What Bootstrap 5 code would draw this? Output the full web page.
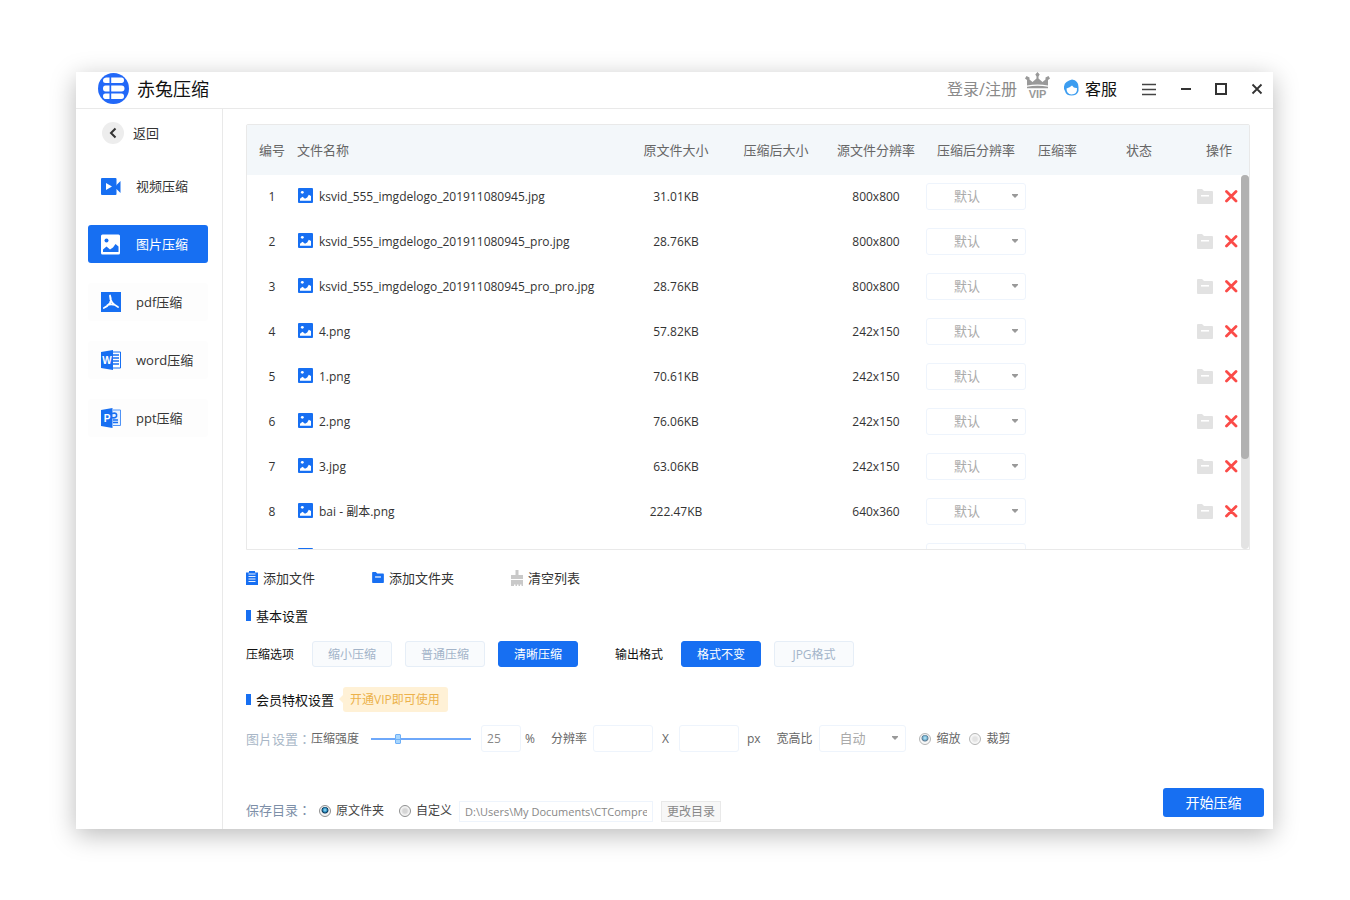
<!DOCTYPE html>
<html lang="zh-CN">
<head>
<meta charset="utf-8">
<meta name="viewport" content="width=device-width, initial-scale=1">
<title>赤兔压缩</title>
<link rel="stylesheet" href="https://cdn.jsdelivr.net/npm/bootstrap@5.3.0/dist/css/bootstrap.min.css">
<style>
:root { --blue: #176ff2; --line: #e9e9e9; --soft: #eef4fc; }
body { font-family: "Open Sans", "Noto Sans CJK SC", sans-serif; font-size: 13px; line-height: 20px; color: #333; background: #fff; }
.desk { padding: 72px 77px 71px 76px; }
.app-window { background: #fff; box-shadow: 0 6px 24px rgba(0,0,0,.27); }
a { color: inherit; text-decoration: none; }
button { font: inherit; }
svg { flex: none; display: block; }
.title-bar { height: 37px; border-bottom: 1px solid var(--line); padding: 0 8px 2px 22px; }
.title-bar > svg { margin-bottom: 2px; }
.brand { font-size: 18px; color: #111; margin-left: 8px; }
.top-link { font-size: 16px; }
.plain-btn { background: none; border: 0; padding: 0; color: inherit; }
.help-icon { margin: 0 6px 4px 14px; }
.win-btns { gap: 24px; margin: 0 2px 0 25px; }
.side { width: 147px; border-right: 1px solid var(--line); padding: 12px 14px 0 12px; }
.back-link { height: 24px; padding-left: 13px; gap: 8px; margin-bottom: 22px; }
.side-nav { gap: 20px; }
.side-item { height: 38px; border-radius: 3px; padding: 0 0 1px 12px; gap: 14px; background: #fdfdfd; }
.side-item.first { background: none; }
.side-item.active { background: var(--blue); color: #fff; }
.work { padding: 15px 9px 0 23px; min-width: 0; }
.list-panel { border: 1px solid var(--line); margin-right: 14px; border-radius: 2px 2px 0 0; flex: 1 1 0; min-height: 0; }
.file-table { table-layout: fixed; width: 100%; font-size: 12px; }
.file-table th { height: 50px; background: #f3f7fa; color: #666; font-weight: 400; font-size: 13px; padding: 0 0 1px; text-align: center; white-space: nowrap; }
.file-table td { height: 45px; padding: 0 0 2px; text-align: center; white-space: nowrap; }
.file-table .name { text-align: left; }
.file-cell { gap: 6px; padding-left: 1px; }
.file-cell svg { margin-bottom: 2px; }
.pick { appearance: none; font: inherit; font-size: 13px; color: #aaa; border: 1px solid var(--soft); border-radius: 3px; height: 27px; width: 100%; padding: 0 0 2px 27px; opacity: 1;
  background: #fff url("data:image/svg+xml,%3Csvg xmlns='http://www.w3.org/2000/svg' width='6' height='4'%3E%3Cpath d='M0 0h6v1L3 4 0 1z' fill='%23999'/%3E%3C/svg%3E") no-repeat right 7px top 10px; }
.scroll-track { top: 50px; right: 0; bottom: 0; width: 8px; background: #e3e3e3; border-radius: 4px; }
.scroll-thumb { height: 76%; background: #b1b1b1; border-radius: 4px; }
.tool-row { height: 40px; margin-top: 8px; gap: 57px; padding-bottom: 1px; }
.tool { gap: 5px; }
.sect { height: 36px; color: #111; padding-bottom: 1px; }
.sect::before { content: ""; width: 5px; height: 11px; background: var(--blue); margin-right: 5px; }
.opt-row { font-size: 12px; color: #111; margin: 7px 0 15px; gap: 13px; }
.opt-label { width: 53px; padding-top: 2px; }
.opt { width: 80px; height: 26px; border: 1px solid #e6eef7; border-radius: 3px; background: #f9fbfd; color: #a3b4c9; padding: 2px 0 0; }
.opt.chosen { background: var(--blue); border-color: var(--blue); color: #fff; }
.vip-tip { background: #fff1d6; color: #ecb14b; font-size: 12px; height: 25px; line-height: 25px; padding: 0 8px 0 7px; border-radius: 3px; margin-left: 9px; }
.vip-tip::before { content: ""; position: absolute; left: -4px; top: 8px; border: 4px solid transparent; border-left: 0; border-right-color: #fff1d6; }
.set-row { font-size: 12px; color: #666; margin: 7px 0 36px; height: 27px; white-space: nowrap; }
.num { width: 60px; height: 27px; border: 1px solid var(--soft); border-radius: 3px; padding: 0 5px; color: #888; background: #fff; font: inherit; }
.num.short { width: 40px; }
.field-label { margin: 0 6px 0 16px; }
.times { margin: 0 10px 0 9px; }
.ratio { width: 87px; padding-left: 20px; }
.level { appearance: none; width: 100px; height: 12px; margin: 0 10px 0 12px; background: linear-gradient(#6ea8fa, #6ea8fa) center / 100% 2px no-repeat; }
.level::-webkit-slider-thumb { appearance: none; width: 6px; height: 10px; border-radius: 1px; border: 1px solid #6fb0f8; background: linear-gradient(#a8d6fd 4px, #6fb0f8 4px 5px, #a8d6fd 5px); }
.dot { appearance: none; width: 12px; height: 12px; margin: 0 6px 0 0; border: 1px solid #8e8f8f; border-radius: 50%; background: radial-gradient(circle, #d5d5d5 2px, #f2f2f2 4px); box-shadow: inset 0 0 0 1px #f4f4f4; }
.dot:checked { background: radial-gradient(circle at 5px 4px, #a9e4fb 0, #2a8fc0 2px, #0c3557 3px, #f2f2f2 4px); }
.faded .dot { opacity: .65; }
.cap, .save-cap { font-family: "Noto Sans CJK TC", sans-serif; font-size: 13px; color: #a9b7c7; }
.save-cap { color: #7d8fa8; padding-bottom: 4px; }
.foot { height: 41px; }
.save-row { font-size: 12px; color: #444; height: 21px; margin-top: 13px; white-space: nowrap; }
.save-row .dot { margin: 0 5px 2px 0; }
.save-row label { padding-bottom: 1px; margin-right: 15px; }
.path-box { width: 194px; height: 21px; border: 1px solid var(--soft); background: #fff; padding: 0 5px; color: #888; font: inherit; font-size: 11px; margin: 0 8px 0 -8px; }
.dir-btn { width: 60px; height: 21px; border: 1px solid #e9e9e9; background: #f7f7f7; color: #888; padding: 0; line-height: 19px; }
.go-btn { width: 101px; height: 29px; border: 0; border-radius: 3px; background: var(--blue); color: #fff; font-size: 14px; }
</style>
</head>
<body>
<svg width="0" height="0" class="position-absolute" aria-hidden="true">
  <symbol id="pic" viewBox="0 0 15 15"><rect width="15" height="15" rx="1" fill="#176ff2"/><circle cx="4.3" cy="4.3" r="1.4" fill="#fff"/><path d="M2 12.8V10.8L4.5 8.8 7 10.8 9.2 9.5 10.8 6.8 13 8V12.8z" fill="#fff"/></symbol>
  <symbol id="folder" viewBox="0 0 16 15"><path d="M0 1Q0 0 1 0H5L7 2H15Q16 2 16 3V14Q16 15 15 15H1Q0 15 0 14z" fill="currentColor"/><path d="M4 6.8H12" stroke="#fff" stroke-width="1.6"/></symbol>
  <symbol id="cross" viewBox="0 0 13 13"><path d="M1.5 1.5 11 11M11 1.5 1.5 11" stroke="#fb4b48" stroke-width="2.8" stroke-linecap="round"/></symbol>
</svg>
<div class="desk vh-100">
<div class="app-window h-100 d-flex flex-column">
  <header class="title-bar d-flex align-items-center flex-shrink-0">
    <svg width="31" height="31" viewBox="0 0 31 31"><circle cx="15.5" cy="15.5" r="15.5" fill="#2268f8"/><g fill="#fff"><path d="M8 4.5H11.5V10H7.5Q5 10 5 7.5T8 4.5zM7.5 12.5H11.5V18.5H7.5Q5 18.5 5 15.5T7.5 12.5zM7.5 20.5H11.5V26H8Q5 26 5 23.2T7.5 20.5z"/><path d="M13.2 4.5H23.5Q26 4.5 26 7.3T23.5 10H13.2zM13.2 12.5H23.5Q26.5 12.5 26.5 15.5T23.5 18.5H13.2zM13.2 20.5H23.5Q26 20.5 26 23.2T23.5 26H13.2z"/></g></svg>
    <span class="brand">赤兔压缩</span>
    <div class="d-flex align-items-center ms-auto">
      <a href="#" class="top-link" style="color:#8a8a8a">登录/注册</a>
      <svg class="mb-2 ms-2" width="25" height="26" viewBox="0 0 25 26" fill="#999"><path d="M12.5 0 14.7 2.5 13.5 4.5V6.5L17.5 10 20.5 7.5V5.5L23.5 4 25 6.5 23 8V13.5Q12.5 11.5 2 13.5V8L0 6.5 1.5 4 4.5 5.500V7.500L7.500 10 11.500 6.500V4.500L10.300 2.500zM2 14.800Q12.500 12.700 23 14.800V16.300H2z"/><text x="12.5" y="25.5" font-family="Liberation Sans" font-weight="700" font-size="11" text-anchor="middle">VIP</text></svg>
      <svg class="help-icon" width="15" height="17" viewBox="0 0 15 17"><path d="M0 10Q-.5 5 2.5 3Q5 1 8 .5Q14.5 1.5 14.5 8V12Q13 16.5 7.500 16.500T1 12z" fill="#3c9df0"/><path d="M2.500 9.500Q6 8.500 8 6.500 10 9.500 13 9 13.500 15.300 7.500 15.500 2.500 15 2.500 9.500z" fill="#fff"/></svg>
      <a href="#" class="top-link" style="color:#111">客服</a>
      <div class="win-btns d-flex align-items-center">
      <button class="plain-btn" aria-label="菜单"><svg width="15" height="13" viewBox="0 0 15 13"><path d="M0 1.5H14M0 6.5H14M0 11.5H14" stroke="#444" stroke-width="1.7"/></svg></button>
      <button class="plain-btn" aria-label="最小化"><svg width="10" height="12" viewBox="0 0 10 12"><path d="M0 6H10" stroke="#333" stroke-width="2"/></svg></button>
      <button class="plain-btn" aria-label="最大化"><svg width="12" height="12" viewBox="0 0 12 12"><rect x="1" y="1" width="10" height="10" fill="none" stroke="#333" stroke-width="2"/></svg></button>
      <button class="plain-btn" aria-label="关闭"><svg width="12" height="12" viewBox="0 0 12 12"><path d="M1.5 1.5 10.5 10.5M10.5 1.5 1.5 10.5" stroke="#333" stroke-width="1.8"/></svg></button>
      </div>
    </div>
  </header>
  <div class="d-flex flex-grow-1" style="min-height:0">
    <aside class="side flex-shrink-0">
      <a href="#" class="back-link d-flex align-items-center">
        <svg width="24" height="24" viewBox="0 0 24 24"><circle cx="12" cy="12" r="11" fill="#ededed"/><path d="M14.5 7.5 10 12 14.5 16.5" fill="none" stroke="#333" stroke-width="2"/></svg>返回</a>
      <nav class="side-nav d-flex flex-column">
        <a href="#" class="side-item first d-flex align-items-center"><svg width="22" height="22" viewBox="0 0 22 22"><rect x="1" y="3" width="15.5" height="17" rx="1" fill="#176ff2"/><path d="M16 10.5 20.5 6V18L16 13.5z" fill="#176ff2"/><path d="M6 8V15L12 11.5z" fill="#fff"/></svg>视频压缩</a>
        <a href="#" class="side-item active d-flex align-items-center" aria-current="page"><svg width="22" height="22" viewBox="0 0 22 22"><rect x="1" y="1.5" width="19" height="20" rx="1.5" fill="#fff"/><circle cx="6.5" cy="7.5" r="2" fill="#176ff2"/><path d="M3 19V16.5L6.5 13.5 10 16.5 13 14.5 15.5 11 18.5 13.5V19z" fill="#176ff2"/></svg>图片压缩</a>
        <a href="#" class="side-item d-flex align-items-center"><svg width="22" height="22" viewBox="0 0 22 22"><rect x="1" y="1" width="20" height="20" fill="#176ff2"/><path d="M10 4.5Q11.5 9 10 12 7.5 15.5 3.8 17M10 5Q10 12 18 16M7.5 14Q11 12.8 15 14" fill="none" stroke="#fff" stroke-width="1.8" stroke-linecap="round"/></svg>pdf压缩</a>
        <a href="#" class="side-item d-flex align-items-center"><svg width="22" height="22" viewBox="0 0 22 22"><path d="M1 3 13 1V21L1 19z" fill="#176ff2"/><path d="M13 3H20.5V19H13" fill="#fff" stroke="#176ff2"/><path d="M13 6H19M13 9H19M13 12H19M13 15H19" stroke="#176ff2" stroke-width="1.5"/><text x="7" y="15" font-family="Liberation Sans" font-weight="700" font-size="10" fill="#fff" text-anchor="middle">W</text></svg>word压缩</a>
        <a href="#" class="side-item d-flex align-items-center"><svg width="22" height="22" viewBox="0 0 22 22"><path d="M13 3H20.5V18.5H13" fill="#eaf3ff" stroke="#4f93f6"/><path d="M12 6.5Q17.5 5 16.5 9.5 15 11.5 12 10.5M13 13H18M13 15.5H18" fill="none" stroke="#176ff2" stroke-width="1.6"/><path d="M1 3 12.5 1V21L1 19z" fill="#176ff2"/><text x="7" y="15" font-family="Liberation Sans" font-weight="700" font-size="10" fill="#fff" text-anchor="middle">P</text></svg>ppt压缩</a>
      </nav>
    </aside>
    <main class="work d-flex flex-column flex-grow-1">
      <section class="list-panel position-relative overflow-hidden">
        <table class="file-table">
          <colgroup><col style="width:50px"><col><col style="width:100px"><col style="width:100px"><col style="width:100px"><col style="width:100px"><col style="width:63px"><col style="width:100px"><col style="width:60px"></colgroup>
          <thead><tr><th>编号</th><th class="name">文件名称</th><th>原文件大小</th><th>压缩后大小</th><th>源文件分辨率</th><th>压缩后分辨率</th><th>压缩率</th><th>状态</th><th>操作</th></tr></thead>
          <tbody id="rows"></tbody>
        </table>
        <div class="scroll-track position-absolute"><div class="scroll-thumb"></div></div>
      </section>
      <div class="tool-row d-flex align-items-center flex-shrink-0">
        <button class="plain-btn tool d-flex align-items-center"><svg width="12" height="14" viewBox="0 0 12 14"><path d="M0 1.5H3V0H9V1.5H12V14H0z" fill="#176ff2"/><path d="M2.5 3H9.5M2.5 5.5H9.5M2.5 8H9.5M2.5 10.5H9.5" stroke="#fff" stroke-width=".9"/></svg>添加文件</button>
        <button class="plain-btn tool d-flex align-items-center"><svg width="12" height="11" style="color:#176ff2"><use href="#folder"/></svg>添加文件夹</button>
        <button class="plain-btn tool d-flex align-items-center"><svg width="12" height="16" viewBox="0 0 12 16" fill="#c9c9c9"><path d="M4.5 0H7.5V5H12V9H0V5H4.5zM0 10H12V16H10.5V14.5H9V16H7.5V14.5H6V16H4.5V14.5H3V16H0z"/></svg>清空列表</button>
      </div>
      <div class="sect d-flex align-items-center flex-shrink-0">基本设置</div>
      <div class="opt-row d-flex align-items-center flex-shrink-0">
        <span class="opt-label">压缩选项</span>
        <button class="opt">缩小压缩</button><button class="opt">普通压缩</button><button class="opt chosen">清晰压缩</button>
        <span class="opt-label ms-4">输出格式</span>
        <button class="opt chosen">格式不变</button><button class="opt">JPG格式</button>
      </div>
      <div class="sect d-flex align-items-center flex-shrink-0">会员特权设置<span class="vip-tip position-relative">开通VIP即可使用</span></div>
      <div class="set-row faded d-flex align-items-center flex-shrink-0">
        <span class="cap" lang="zh-TW">图片设置：</span><label for="level">压缩强度</label>
        <input id="level" class="level" type="range" min="0" max="100" value="25">
        <input class="num short" type="text" value="25" aria-label="压缩强度百分比"><span class="ms-1">%</span>
        <label for="rw" class="field-label">分辨率</label><input id="rw" class="num" type="text">
        <span class="times">X</span><input class="num" type="text" aria-label="高度"><span class="ms-2">px</span>
        <label for="ratio" class="field-label">宽高比</label>
        <select id="ratio" class="pick ratio"><option>自动</option></select>
        <input id="m1" class="dot" style="margin-left:13px" type="radio" name="mode" checked><label for="m1">缩放</label>
        <input id="m2" class="dot ms-2" type="radio" name="mode"><label for="m2">裁剪</label>
      </div>
      <div class="foot d-flex align-items-start flex-shrink-0">
        <div class="save-row d-flex align-items-center">
          <span class="save-cap me-2" lang="zh-TW">保存目录：</span>
          <input id="d1" class="dot" type="radio" name="dir" checked><label for="d1">原文件夹</label>
          <input id="d2" class="dot" type="radio" name="dir"><label for="d2">自定义</label>
          <input class="path-box" type="text" value="D:\Users\My Documents\CTCompress" aria-label="保存路径">
          <button class="dir-btn">更改目录</button>
        </div>
        <button class="go-btn ms-auto">开始压缩</button>
      </div>
    </main>
  </div>
</div>
</div>
<script src="https://cdn.jsdelivr.net/npm/bootstrap@5.3.0/dist/js/bootstrap.bundle.min.js"></script>
<script>
const files = [
  ["ksvid_555_imgdelogo_201911080945.jpg", "31.01KB", "800x800"],
  ["ksvid_555_imgdelogo_201911080945_pro.jpg", "28.76KB", "800x800"],
  ["ksvid_555_imgdelogo_201911080945_pro_pro.jpg", "28.76KB", "800x800"],
  ["4.png", "57.82KB", "242x150"],
  ["1.png", "70.61KB", "242x150"],
  ["2.png", "76.06KB", "242x150"],
  ["3.jpg", "63.06KB", "242x150"],
  ["bai - 副本.png", "222.47KB", "640x360"],
  ["", "", ""]
];
document.getElementById("rows").innerHTML = files.map(([name, size, res], i) => `
<tr><td>${name ? i + 1 : ""}</td>
<td class="name"><div class="file-cell d-flex align-items-center"><svg width="15" height="15"><use href="#pic"/></svg><span>${name}</span></div></td>
<td>${size}</td><td></td><td>${res}</td>
<td><select class="pick d-block" aria-label="压缩后分辨率"><option>默认</option></select></td><td></td><td></td>
<td><div class="d-flex align-items-center ps-2"><button class="plain-btn" aria-label="打开文件夹"><svg width="16" height="15" style="color:#e2e2e2"><use href="#folder"/></svg></button><button class="plain-btn ms-2 ps-1" aria-label="删除"><svg width="13" height="13"><use href="#cross"/></svg></button></div></td></tr>`).join("");
</script>
</body>
</html>
